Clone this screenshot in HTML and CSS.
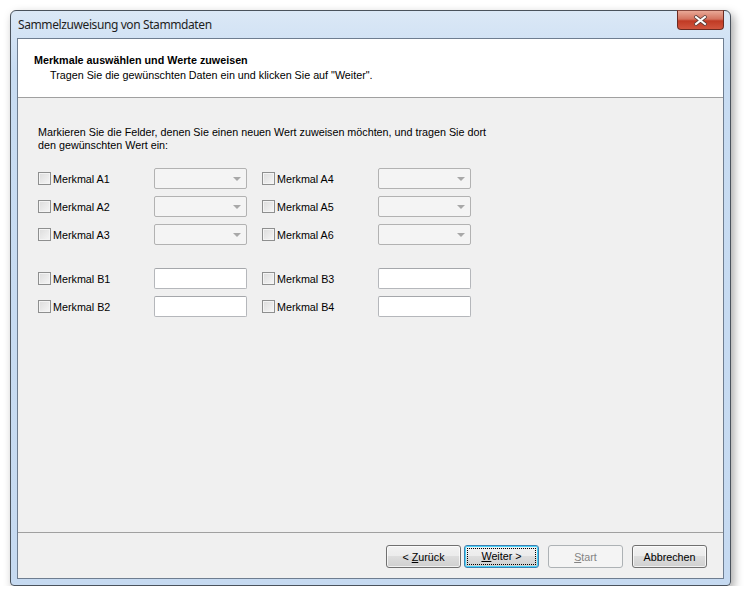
FILE: index.html
```html
<!DOCTYPE html>
<html lang="de">
<head>
    <meta charset="UTF-8">
    <title>Sammelzuweisung von Stammdaten</title>
    <link rel="stylesheet" href="styles.css">
</head>
<body>
    <div class="window">
        <div class="titlebar">
            <span class="title">Sammelzuweisung von Stammdaten</span>
            <span class="close">
                <svg width="13" height="11" viewBox="0 0 13 11">
                    <path d="M2 2 L11 9 M11 2 L2 9" stroke="#5a3a36" stroke-width="3.6" stroke-linecap="square"/>
                    <path d="M2 2 L11 9 M11 2 L2 9" stroke="#fff" stroke-width="2" stroke-linecap="square"/>
                </svg>
            </span>
        </div>
        <div class="client">
            <div class="header">
                <div class="header-title">Merkmale auswählen und Werte zuweisen</div>
                <div class="header-sub">Tragen Sie die gewünschten Daten ein und klicken Sie auf "Weiter".</div>
            </div>
            <div class="content">
                <p class="intro">Markieren Sie die Felder, denen Sie einen neuen Wert zuweisen möchten, und tragen Sie dort<br>den gewünschten Wert ein:</p>
                <div class="fields">
                    <div class="field"><label class="check"><span class="box"></span>Merkmal A1</label><span class="combo"></span></div>
                    <div class="field"><label class="check"><span class="box"></span>Merkmal A4</label><span class="combo"></span></div>
                    <div class="field"><label class="check"><span class="box"></span>Merkmal A2</label><span class="combo"></span></div>
                    <div class="field"><label class="check"><span class="box"></span>Merkmal A5</label><span class="combo"></span></div>
                    <div class="field"><label class="check"><span class="box"></span>Merkmal A3</label><span class="combo"></span></div>
                    <div class="field"><label class="check"><span class="box"></span>Merkmal A6</label><span class="combo"></span></div>
                </div>
                <div class="fields fields-b">
                    <div class="field"><label class="check"><span class="box"></span>Merkmal B1</label><span class="textbox"></span></div>
                    <div class="field"><label class="check"><span class="box"></span>Merkmal B3</label><span class="textbox"></span></div>
                    <div class="field"><label class="check"><span class="box"></span>Merkmal B2</label><span class="textbox"></span></div>
                    <div class="field"><label class="check"><span class="box"></span>Merkmal B4</label><span class="textbox"></span></div>
                </div>
            </div>
            <div class="footer">
                <button class="btn">&lt; <u>Z</u>urück</button>
                <button class="btn btn-default"><span class="focus"><u>W</u>eiter &gt;</span></button>
                <button class="btn btn-disabled"><u>S</u>tart</button>
                <button class="btn">Abbrechen</button>
            </div>
        </div>
    </div>
</body>
</html>
```

FILE: styles.css
```css
body {
    margin: 0;
    background-color: #fff;
    font-family: 'Liberation Sans', Arial, sans-serif;
    font-size: 10.75px;
    color: #000;
}
.window {
    margin: 10px 0 0 10px;
    width: 707px;
    padding: 0 6px 6px 6px;
    border: 1px solid #4a525c;
    border-radius: 6px 6px 4px 4px;
    background: linear-gradient(to bottom, #dbe8f6, #c8dcf2 60px, #c6daf1);
    box-shadow: 3px 4px 10px rgba(0, 0, 0, 0.35);
}
.titlebar {
    height: 27px;
    display: flex;
    justify-content: space-between;
    align-items: flex-start;
}
.title {
    font-family: 'Noto Sans', 'Open Sans', sans-serif;
    font-size: 12px;
    letter-spacing: -0.4px;
    color: #1e1e1e;
    margin: 6px 0 0 1px;
    line-height: 16px;
}
.close {
    width: 45px;
    height: 18px;
    margin-top: -1px;
    border: 1px solid #6b2b22;
    border-top-color: #8a4a40;
    border-radius: 0 0 4px 4px;
    background: linear-gradient(to bottom, #e9a897, #d4735f 45%, #c03a24 55%, #d1553e);
    display: flex;
    align-items: center;
    justify-content: center;
}
.client {
    height: 539px;
    border: 1px solid #6e7d90;
    background-color: #f0f0f0;
    display: flex;
    flex-direction: column;
}
.header {
    height: 44px;
    padding: 14px 0 0 16px;
    background-color: #fff;
    border-bottom: 1px solid #a0a0a0;
    line-height: 15px;
}
.header-title {
    font-weight: bold;
}
.header-sub {
    padding-left: 16px;
}
.content {
    flex: 1;
    padding: 28px 20px 0 20px;
}
.intro {
    margin: 0;
    line-height: 13px;
}
.fields {
    display: grid;
    grid-template-columns: 209px 209px;
    column-gap: 15px;
    row-gap: 7px;
    margin-top: 16px;
}
.fields-b {
    margin-top: 23px;
}
.field {
    display: flex;
    align-items: center;
    height: 21px;
}
.check {
    width: 116px;
    display: flex;
    align-items: center;
}
.box {
    width: 11px;
    height: 11px;
    border: 1px solid #8e8f8f;
    margin-right: 2px;
    background: linear-gradient(135deg, #dcdcdc, #f6f6f6);
    box-shadow: inset 0 0 0 1px #f4f4f4;
}
.combo {
    position: relative;
    width: 91px;
    height: 19px;
    border: 1px solid #b2b2b2;
    border-radius: 2px;
    background-color: #f4f4f4;
}
.combo::after {
    content: "";
    position: absolute;
    right: 5px;
    top: 8px;
    border-left: 4px solid transparent;
    border-right: 4px solid transparent;
    border-top: 4px solid #a8a8a8;
}
.textbox {
    width: 91px;
    height: 19px;
    border: 1px solid #b5b7bb;
    border-top-color: #a5a7ab;
    border-radius: 2px;
    background-color: #fff;
}
.footer {
    border-top: 1px solid #a0a0a0;
    padding: 12px 16px 10px 0;
    display: flex;
    justify-content: flex-end;
}
.btn {
    width: 75px;
    height: 23px;
    margin-left: 9px;
    padding: 0;
    font-family: inherit;
    font-size: 10.75px;
    color: #000;
    border: 1px solid #707070;
    border-radius: 3px;
    background: linear-gradient(to bottom, #f2f2f2, #ebebeb 50%, #dddddd 50%, #cfcfcf);
    box-shadow: inset 0 0 0 1px rgba(255, 255, 255, 0.7);
}
.btn u {
    text-decoration-thickness: 1px;
    text-underline-offset: 1px;
}
.btn-default {
    margin-left: 3px;
    border-color: #3c7fb1;
    box-shadow: inset 0 0 0 1px #48d4fa;
}
.focus {
    display: block;
    margin: 0 auto;
    width: 67px;
    height: 15px;
    line-height: 15px;
    border: 1px dotted #000;
}
.btn-disabled {
    color: #838383;
    border-color: #adb2b5;
    background: #f4f4f4;
    box-shadow: none;
}
```
